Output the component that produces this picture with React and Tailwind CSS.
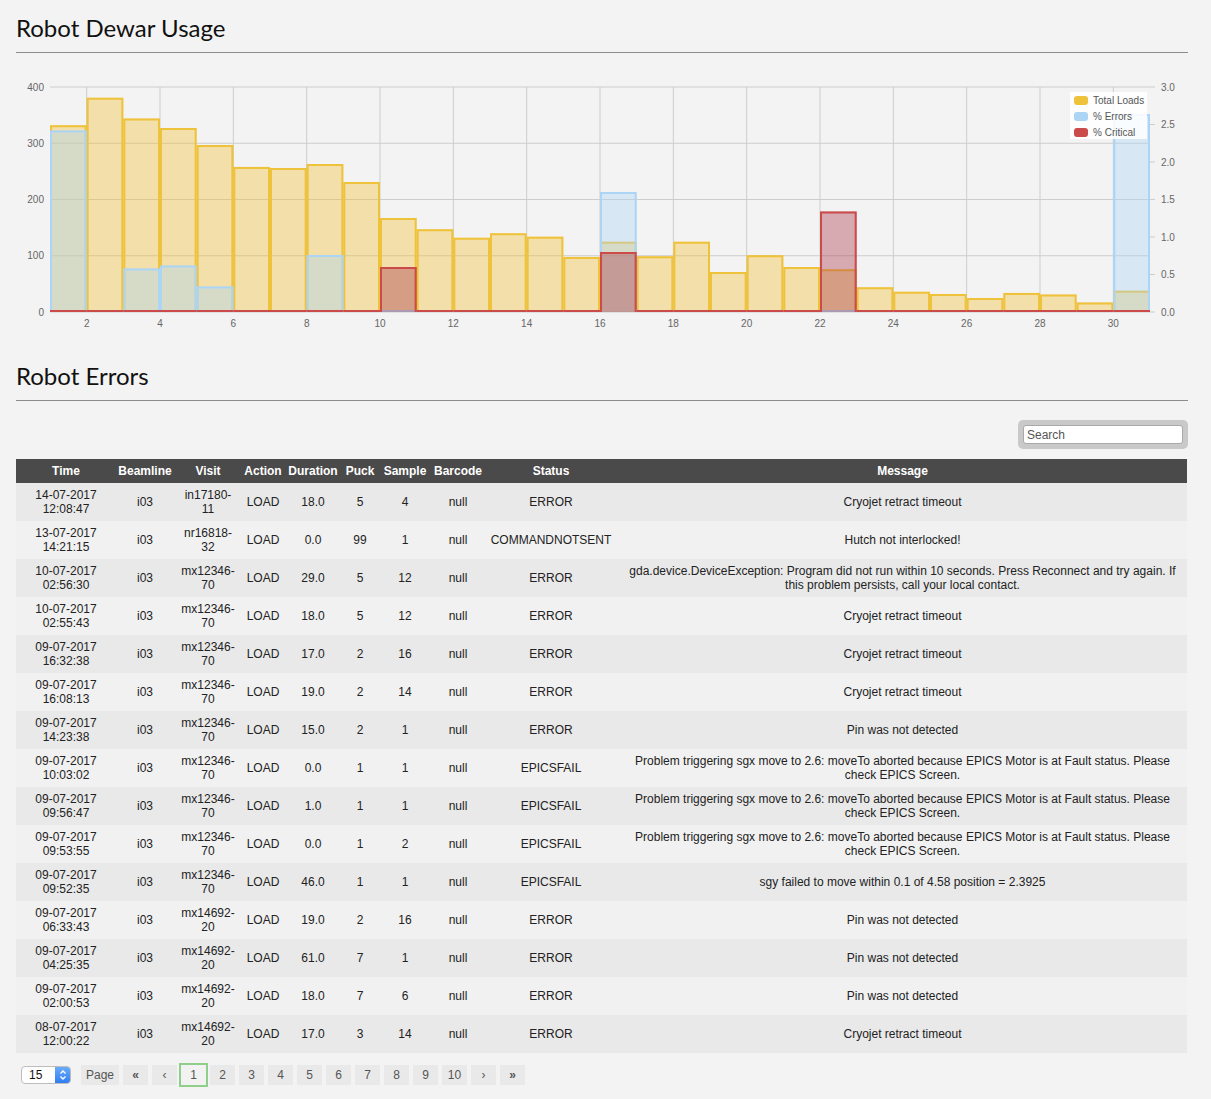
import React from "react";

const loads = [332, 381, 344, 327, 297, 258, 256, 263, 231, 167, 147, 132, 140, 134, 98, 125, 99, 125, 71, 101, 80, 76, 44, 36, 32, 25, 34, 31, 17, 38];
const errors = [2.42, 0, 0.58, 0.62, 0.34, 0, 0, 0.76, 0, 0, 0, 0, 0, 0, 0, 1.6, 0, 0, 0, 0, 0, 0, 0, 0, 0, 0, 0, 0, 0, 2.64];
const critical = loads.map((_, i) => (i === 9 ? 0.6 : i === 15 ? 0.8 : i === 21 ? 1.34 : 0));

const X0 = 50;
const W = 36.667;
const BASE = 312;
const TOP = 87;
const yL = (v) => BASE - (v * 225) / 400;
const yR = (v) => BASE - v * 75;

function Bars({ values, toY, fill, stroke }) {
  return (
    <g>
      {values.map((v, i) => {
        const xa = X0 + i * W;
        const xb = X0 + (i + 1) * W;
        const top = toY(v);
        if (v === 0) {
          return <path key={i} d={`M${xa} ${BASE - 1} H${xb}`} stroke={stroke} strokeWidth="2" fill="none" />;
        }
        return (
          <g key={i}>
            <rect x={xa} y={top} width={W} height={BASE - top} fill={fill} />
            <path
              d={`M${xa + 1} ${BASE} V${top + 1} H${xb - 1} V${BASE}`}
              stroke={stroke}
              strokeWidth="2"
              fill="none"
            />
          </g>
        );
      })}
    </g>
  );
}

function Chart() {
  const leftTicks = [0, 100, 200, 300, 400];
  const rightTicks = ["0.0", "0.5", "1.0", "1.5", "2.0", "2.5", "3.0"];
  const xLabels = [];
  for (let n = 2; n <= 30; n += 2) xLabels.push(n);
  return (
    <svg
      width="1172"
      height="292"
      viewBox="16 53 1172 292"
      className="block font-['Liberation_Sans',Arial,sans-serif]"
    >
      {leftTicks.map((t) => (
        <g key={t}>
          <line x1={X0} x2={1150} y1={yL(t)} y2={yL(t)} stroke="#cdcdcd" strokeWidth="1" />
          <text x={44} y={yL(t) + 3.5} fontSize="10" fill="#666" textAnchor="end">
            {t}
          </text>
        </g>
      ))}
      {xLabels.map((n) => {
        const x = X0 + (n - 1) * W;
        return (
          <g key={n}>
            <line x1={x} x2={x} y1={TOP} y2={BASE} stroke="#cdcdcd" strokeWidth="1" />
            <text x={x} y={326.5} fontSize="10" fill="#666" textAnchor="middle">
              {n}
            </text>
          </g>
        );
      })}
      {rightTicks.map((t) => (
        <g key={t}>
          <line x1={1150} x2={1155} y1={yR(parseFloat(t))} y2={yR(parseFloat(t))} stroke="#cdcdcd" strokeWidth="1" />
          <text x={1161} y={yR(parseFloat(t)) + 3.5} fontSize="10" fill="#666">
            {t}
          </text>
        </g>
      ))}
      <Bars values={loads} toY={yL} fill="rgba(239,193,61,0.4)" stroke="#efc23b" />
      <Bars values={errors} toY={yR} fill="rgba(172,213,245,0.4)" stroke="#acd5f5" />
      <Bars values={critical} toY={yR} fill="rgba(170,60,75,0.4)" stroke="#cb4a4a" />
      <g>
        <rect x="1070" y="92" width="77" height="47" fill="#ffffff" fillOpacity="0.85" />
        {[
          ["Total Loads", "#efc23b"],
          ["% Errors", "#acd5f5"],
          ["% Critical", "#cb4a4a"],
        ].map(([label, c], i) => (
          <g key={label}>
            <rect x="1074" y={96 + i * 16} width="14" height="9" rx="3" fill={c} />
            <text x="1093" y={104 + i * 16} fontSize="10" fill="#555">
              {label}
            </text>
          </g>
        ))}
      </g>
    </svg>
  );
}

const EPICS =
  "Problem triggering sgx move to 2.6: moveTo aborted because EPICS Motor is at Fault status. Please check EPICS Screen.";

const rows = [
  ["14-07-2017", "12:08:47", "i03", "in17180-", "11", "LOAD", "18.0", "5", "4", "null", "ERROR", "Cryojet retract timeout"],
  ["13-07-2017", "14:21:15", "i03", "nr16818-", "32", "LOAD", "0.0", "99", "1", "null", "COMMANDNOTSENT", "Hutch not interlocked!"],
  [
    "10-07-2017",
    "02:56:30",
    "i03",
    "mx12346-",
    "70",
    "LOAD",
    "29.0",
    "5",
    "12",
    "null",
    "ERROR",
    "gda.device.DeviceException: Program did not run within 10 seconds. Press Reconnect and try again. If this problem persists, call your local contact.",
  ],
  ["10-07-2017", "02:55:43", "i03", "mx12346-", "70", "LOAD", "18.0", "5", "12", "null", "ERROR", "Cryojet retract timeout"],
  ["09-07-2017", "16:32:38", "i03", "mx12346-", "70", "LOAD", "17.0", "2", "16", "null", "ERROR", "Cryojet retract timeout"],
  ["09-07-2017", "16:08:13", "i03", "mx12346-", "70", "LOAD", "19.0", "2", "14", "null", "ERROR", "Cryojet retract timeout"],
  ["09-07-2017", "14:23:38", "i03", "mx12346-", "70", "LOAD", "15.0", "2", "1", "null", "ERROR", "Pin was not detected"],
  ["09-07-2017", "10:03:02", "i03", "mx12346-", "70", "LOAD", "0.0", "1", "1", "null", "EPICSFAIL", EPICS],
  ["09-07-2017", "09:56:47", "i03", "mx12346-", "70", "LOAD", "1.0", "1", "1", "null", "EPICSFAIL", EPICS],
  ["09-07-2017", "09:53:55", "i03", "mx12346-", "70", "LOAD", "0.0", "1", "2", "null", "EPICSFAIL", EPICS],
  ["09-07-2017", "09:52:35", "i03", "mx12346-", "70", "LOAD", "46.0", "1", "1", "null", "EPICSFAIL", "sgy failed to move within 0.1 of 4.58 position = 2.3925"],
  ["09-07-2017", "06:33:43", "i03", "mx14692-", "20", "LOAD", "19.0", "2", "16", "null", "ERROR", "Pin was not detected"],
  ["09-07-2017", "04:25:35", "i03", "mx14692-", "20", "LOAD", "61.0", "7", "1", "null", "ERROR", "Pin was not detected"],
  ["09-07-2017", "02:00:53", "i03", "mx14692-", "20", "LOAD", "18.0", "7", "6", "null", "ERROR", "Pin was not detected"],
  ["08-07-2017", "12:00:22", "i03", "mx14692-", "20", "LOAD", "17.0", "3", "14", "null", "ERROR", "Cryojet retract timeout"],
];

const headers = ["Time", "Beamline", "Visit", "Action", "Duration", "Puck", "Sample", "Barcode", "Status", "Message"];

function ErrorsTable() {
  return (
    <table className="mt-[10px] w-[1171px] table-fixed text-[12px] leading-[14px] text-[#222]">
      <colgroup>
        <col className="w-[100px]" />
        <col className="w-[58px]" />
        <col className="w-[68px]" />
        <col className="w-[42px]" />
        <col className="w-[58px]" />
        <col className="w-[36px]" />
        <col className="w-[54px]" />
        <col className="w-[52px]" />
        <col className="w-[134px]" />
        <col />
      </colgroup>
      <thead>
        <tr className="bg-[#4a4a4a] text-white">
          {headers.map((h) => (
            <th key={h} className="h-[24px] px-[1px] py-0 text-center font-bold">
              {h}
            </th>
          ))}
        </tr>
      </thead>
      <tbody>
        {rows.map((r, i) => (
          <tr key={i} className={i % 2 === 0 ? "bg-[#e9e9e9]" : "bg-[#f1f1f1]"}>
            <td className="h-[38px] px-[8px] py-0 text-center align-middle">
              {r[0]} {r[1]}
            </td>
            <td className="px-[2px] text-center align-middle">{r[2]}</td>
            <td className="px-[6px] text-center align-middle">
              {r[3]}
              <wbr />
              {r[4]}
            </td>
            <td className="px-[1px] text-center align-middle">{r[5]}</td>
            <td className="px-[2px] text-center align-middle">{r[6]}</td>
            <td className="px-[2px] text-center align-middle">{r[7]}</td>
            <td className="px-[2px] text-center align-middle">{r[8]}</td>
            <td className="px-[2px] text-center align-middle">{r[9]}</td>
            <td className="px-[2px] text-center align-middle">{r[10]}</td>
            <td className="px-[4px] text-center align-middle">{r[11]}</td>
          </tr>
        ))}
      </tbody>
    </table>
  );
}

function Pager() {
  const btn = "flex h-[20px] w-[25px] items-center justify-center bg-[#e9e9e9] text-[12px] text-[#555]";
  return (
    <div className="mt-[10px] flex h-[24px] items-center pl-[5px] text-[12px]">
      <div className="flex h-[18px] w-[50px] items-stretch overflow-hidden rounded-[4px] border border-[#bdbdbd] bg-white">
        <div className="flex flex-1 items-center pl-[7px] text-[12px] text-[#111]">15</div>
        <div className="flex w-[15px] items-center justify-center bg-gradient-to-b from-[#6aaaf8] to-[#2f7ef2]">
          <svg width="8" height="12" viewBox="0 0 8 12">
            <path d="M1.5 4.5 L4 2 L6.5 4.5" stroke="#fff" strokeWidth="1.4" fill="none" />
            <path d="M1.5 7.5 L4 10 L6.5 7.5" stroke="#fff" strokeWidth="1.4" fill="none" />
          </svg>
        </div>
      </div>
      <div className="ml-[10px] flex items-center gap-[4px]">
        <div className="flex h-[20px] w-[38px] items-center justify-center bg-[#e9e9e9] text-[12px] text-[#555]">Page</div>
        <div className={btn + " font-bold"}>«</div>
        <div className={btn}>‹</div>
        <div className="flex h-[20px] w-[25px] items-center justify-center bg-[#f2f2f2] text-[12px] text-[#555] outline-2 outline-[#8fcf8a]">
          1
        </div>
        {[2, 3, 4, 5, 6, 7, 8, 9, 10].map((n) => (
          <div key={n} className={btn}>
            {n}
          </div>
        ))}
        <div className={btn}>›</div>
        <div className={btn + " font-bold"}>»</div>
      </div>
    </div>
  );
}

export default function App() {
  return (
    <div className="min-h-[1099px] w-[1211px] bg-[#f3f3f3] font-['Liberation_Sans',Arial,sans-serif]">
      <div className="w-[1188px] pl-[16px]">
        <h2 className="border-b border-[#8c8c8c] pb-[10px] pt-[14px] font-['Lato',sans-serif] text-[24px] font-normal leading-[28px] text-[#111]">
          Robot Dewar Usage
        </h2>
        <Chart />
        <h2 className="border-b border-[#8c8c8c] pb-[10px] pt-[17px] font-['Lato',sans-serif] text-[24px] font-normal leading-[28px] text-[#111]">
          Robot Errors
        </h2>
        <div className="mt-[19px] flex justify-end">
          <div className="h-[29px] w-[170px] rounded-[5px] bg-[#c9c9c9] p-[5px]">
            <input
              placeholder="Search"
              className="block h-[19px] w-[160px] rounded-[3px] border border-[#a9a9a9] bg-white px-[3px] text-[12px] text-[#222] outline-none placeholder:text-[#555]"
            />
          </div>
        </div>
        <ErrorsTable />
        <Pager />
      </div>
    </div>
  );
}
